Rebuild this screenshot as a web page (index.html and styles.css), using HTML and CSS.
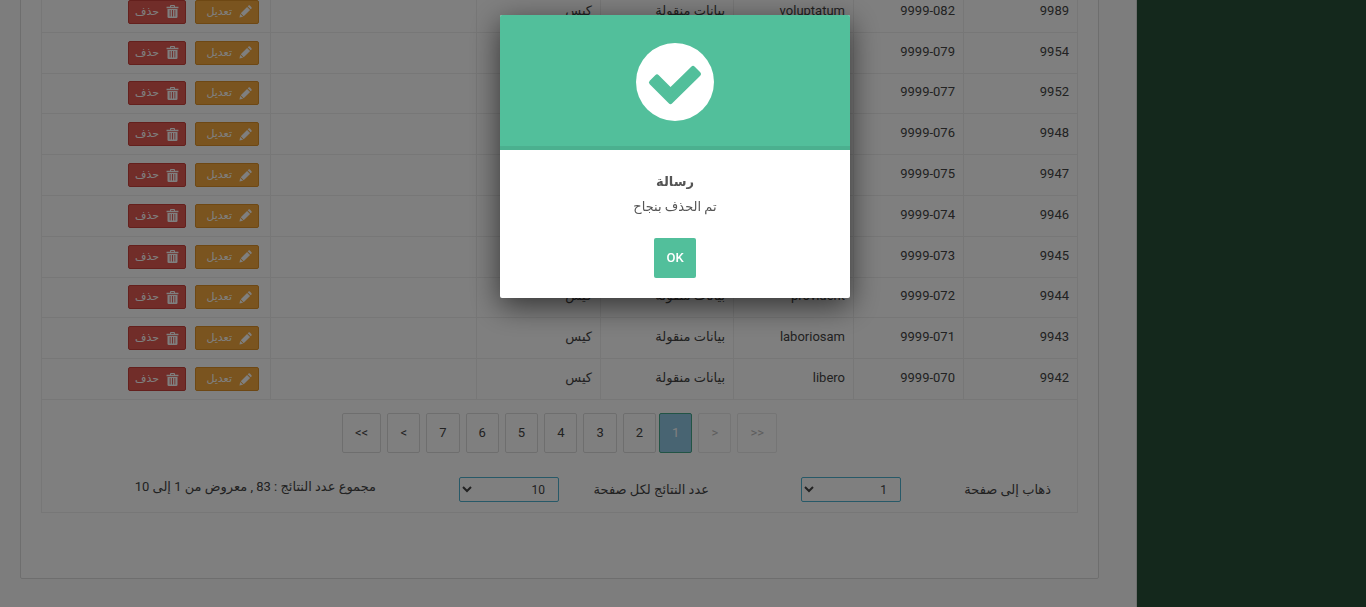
FILE: index.html
```html
<!DOCTYPE html>
<html lang="ar" dir="rtl">
<head>
<meta charset="utf-8">
<meta name="viewport" content="width=device-width, initial-scale=1">
<title>رسالة</title>
<link rel="stylesheet" href="styles.css">
</head>
<body>
<svg class="sprite" aria-hidden="true">
  <symbol id="pencil" viewBox="0 0 14 14"><path d="M0.5 13.5 1.3 9.6 4.4 12.7ZM1.9 8.9 8.7 2.1 11.9 5.3 5.1 12.1ZM9.4 1.4 10.3.5Q11 0 11.7.6L13.4 2.3Q14 3 13.5 3.7L12.6 4.6Z"/></symbol>
  <symbol id="trash" viewBox="0 0 14 14"><path fill-rule="evenodd" d="M4.3 2V1Q4.3 0 5.3 0H8.7Q9.7 0 9.7 1V2H13.4V3.6H.6V2ZM5.5 2H8.5V1.1H5.5ZM1.6 4.2H12.4V12.6Q12.4 14 11 14H3Q1.6 14 1.6 12.6ZM4 5.5V12.5H4.9V5.5ZM6.5 5.5V12.5H7.5V5.5ZM9.1 5.5V12.5H10V5.5Z"/></symbol>
</svg>
<div class="page">
  <aside class="sidebar"></aside>
  <main class="content">
    <section class="card">
      <table class="grid">
        <colgroup><col class="c-id"><col class="c-code"><col class="c-name"><col class="c-source"><col class="c-type"><col class="c-note"><col></colgroup>
        <tbody id="rows"></tbody>
      </table>
      <div class="footer">
        <nav class="pager" dir="ltr">
          <button>&lt;&lt;</button><button>&lt;</button><button>7</button><button>6</button><button>5</button><button>4</button><button>3</button><button>2</button><button class="current">1</button><button disabled>&gt;</button><button disabled>&gt;&gt;</button>
        </nav>
        <div class="tools">
          <div class="field"><label for="goto">ذهاب إلى صفحة</label><select id="goto"><option>1</option><option>2</option></select></div>
          <div class="field"><label for="size">عدد النتائج لكل صفحة</label><select id="size"><option>10</option><option>20</option></select></div>
          <p class="summary">مجموع عدد النتائج : 83 , معروض من 1 إلى 10</p>
        </div>
      </div>
    </section>
  </main>
</div>
<div class="overlay">
  <div class="modal" role="dialog" aria-labelledby="modal-title">
    <div class="modal-head">
      <svg class="check" viewBox="0 0 78 78" aria-hidden="true"><circle cx="39" cy="39" r="39"/><path d="M15.5 39.5 21 34 34.5 47.5 57 25.5 62.5 31 34.5 58.5Z"/></svg>
    </div>
    <div class="modal-body">
      <h2 id="modal-title">رسالة</h2>
      <p>تم الحذف بنجاح</p>
      <button class="ok">OK</button>
    </div>
  </div>
</div>
<script src="app.js"></script>
</body>
</html>
```
FILE: styles.css
```css
* { box-sizing: border-box; }
body {
  margin: 0;
  height: 100vh;
  overflow: hidden;
  background: #fafafa;
  color: #444;
  font: 13px/20px Roboto, "DejaVu Sans", sans-serif;
}
button, select { font: inherit; color: inherit; }
.sprite { display: none; }
.page { display: flex; min-height: 100vh; }
.sidebar { flex: 0 0 229px; background: #285039; }
.content { flex: 1; min-width: 0; padding: 0 37px 28px 20px; border-right: 1px solid #ddd; }
.card {
  margin-top: -10px;
  padding: 0 20px 65px;
  background: #fff;
  border: 1px solid #dcdcdc;
  border-radius: 2px;
}
.grid {
  width: 100%;
  height: 409px;
  table-layout: fixed;
  border-collapse: collapse;
}
.c-id { width: 114px; }
.c-code { width: 110px; }
.c-name { width: 120px; }
.c-source { width: 133px; }
.c-type { width: 124px; }
.c-note { width: 206px; }
.grid td { padding: 0 8px 2px; border: 1px solid #eee; white-space: nowrap; }
.grid td.actions { padding: 0 11px 0 10px; }
.buttons { display: flex; gap: 9px; }
.btn {
  display: flex;
  align-items: center;
  gap: 7px;
  height: 24px;
  padding: 0 6px;
  border: 1px solid;
  border-radius: 2px;
  color: #fff;
  font-size: 11px;
  line-height: 16px;
}
.btn svg { flex: none; width: 13px; height: 13px; fill: currentColor; }
.edit { width: 64px; background: #f4a93f; border-color: #dc9128; }
.delete { width: 58px; background: #e25b53; border-color: #c8413a; }
.footer { padding: 13px 26px 10px; border: 1px solid #eee; border-top: 0; }
.pager { display: flex; justify-content: center; gap: 6px; }
.pager button {
  min-width: 33px;
  height: 40px;
  padding: 0 12px;
  background: #fff;
  border: 1px solid #ddd;
  border-radius: 2px;
}
.pager .current { margin-left: -3px; background: #91c8e4; border-color: #45a88a; color: #fff; }
.pager button:disabled { color: #bbb; border-color: #eaeaea; }
.tools { display: flex; align-items: flex-start; gap: 83px; margin-top: 24px; }
.field { display: flex; align-items: center; justify-content: space-between; width: 250px; }
.field + .field { margin-right: 9px; }
.field select {
  width: 100px;
  height: 25px;
  padding: 0 9px 0 0;
  background: #fff;
  border: 1px solid #4fb3d0;
  border-radius: 2px;
  font-size: 12px;
}
.summary { margin: 0; white-space: nowrap; }
.overlay {
  position: fixed;
  inset: 0;
  display: flex;
  justify-content: center;
  align-items: flex-start;
  padding: 15px 16px 0 0;
  background: rgba(0, 0, 0, .5);
}
.modal {
  width: 350px;
  border-radius: 2px;
  overflow: hidden;
  background: #fff;
  box-shadow: 0 8px 30px rgba(0, 0, 0, .6);
  color: #555;
  text-align: center;
}
.modal-head { padding: 28px 0 25px; background: #52bf9b; border-bottom: 4px solid #4bb08f; }
.check { display: block; width: 78px; height: 78px; margin: 0 auto; fill: #fff; }
.check path { fill: #52bf9b; stroke: #52bf9b; stroke-width: 5; stroke-linejoin: round; }
.modal-body { padding: 20px 16px; }
.modal-body h2 { margin: 0; font-size: 13px; line-height: 24px; }
.modal-body p { margin: 0 0 18px; line-height: 26px; }
.ok {
  height: 40px;
  padding: 0 12px;
  border: 0;
  border-radius: 2px;
  background: #52bf9b;
  color: #fff;
  font-weight: 500;
}
.modal-body .ok { display: block; margin: 0 auto; }
```
FILE: app.js
```js
const records = [
  ["9989", "9999-082", "voluptatum"], ["9954", "9999-079", ""],
  ["9952", "9999-077", ""], ["9948", "9999-076", ""],
  ["9947", "9999-075", ""], ["9946", "9999-074", ""],
  ["9945", "9999-073", ""], ["9944", "9999-072", "provident"],
  ["9943", "9999-071", "laboriosam"], ["9942", "9999-070", "libero"]
];
const covered = (i) => i > 0 && i < 7;
document.getElementById("rows").innerHTML = records.map(([id, code, name], i) => `
  <tr><td>${id}</td><td><bdi dir="ltr">${code}</bdi></td><td>${name}</td>
  <td>${covered(i) ? "" : "بيانات منقولة"}</td><td>${covered(i) ? "" : "كيس"}</td><td></td>
  <td class="actions"><div class="buttons">
    <button class="btn edit"><svg aria-hidden="true"><use href="#pencil"/></svg>تعديل</button>
    <button class="btn delete"><svg aria-hidden="true"><use href="#trash"/></svg>حذف</button>
  </div></td></tr>`).join("");
```
